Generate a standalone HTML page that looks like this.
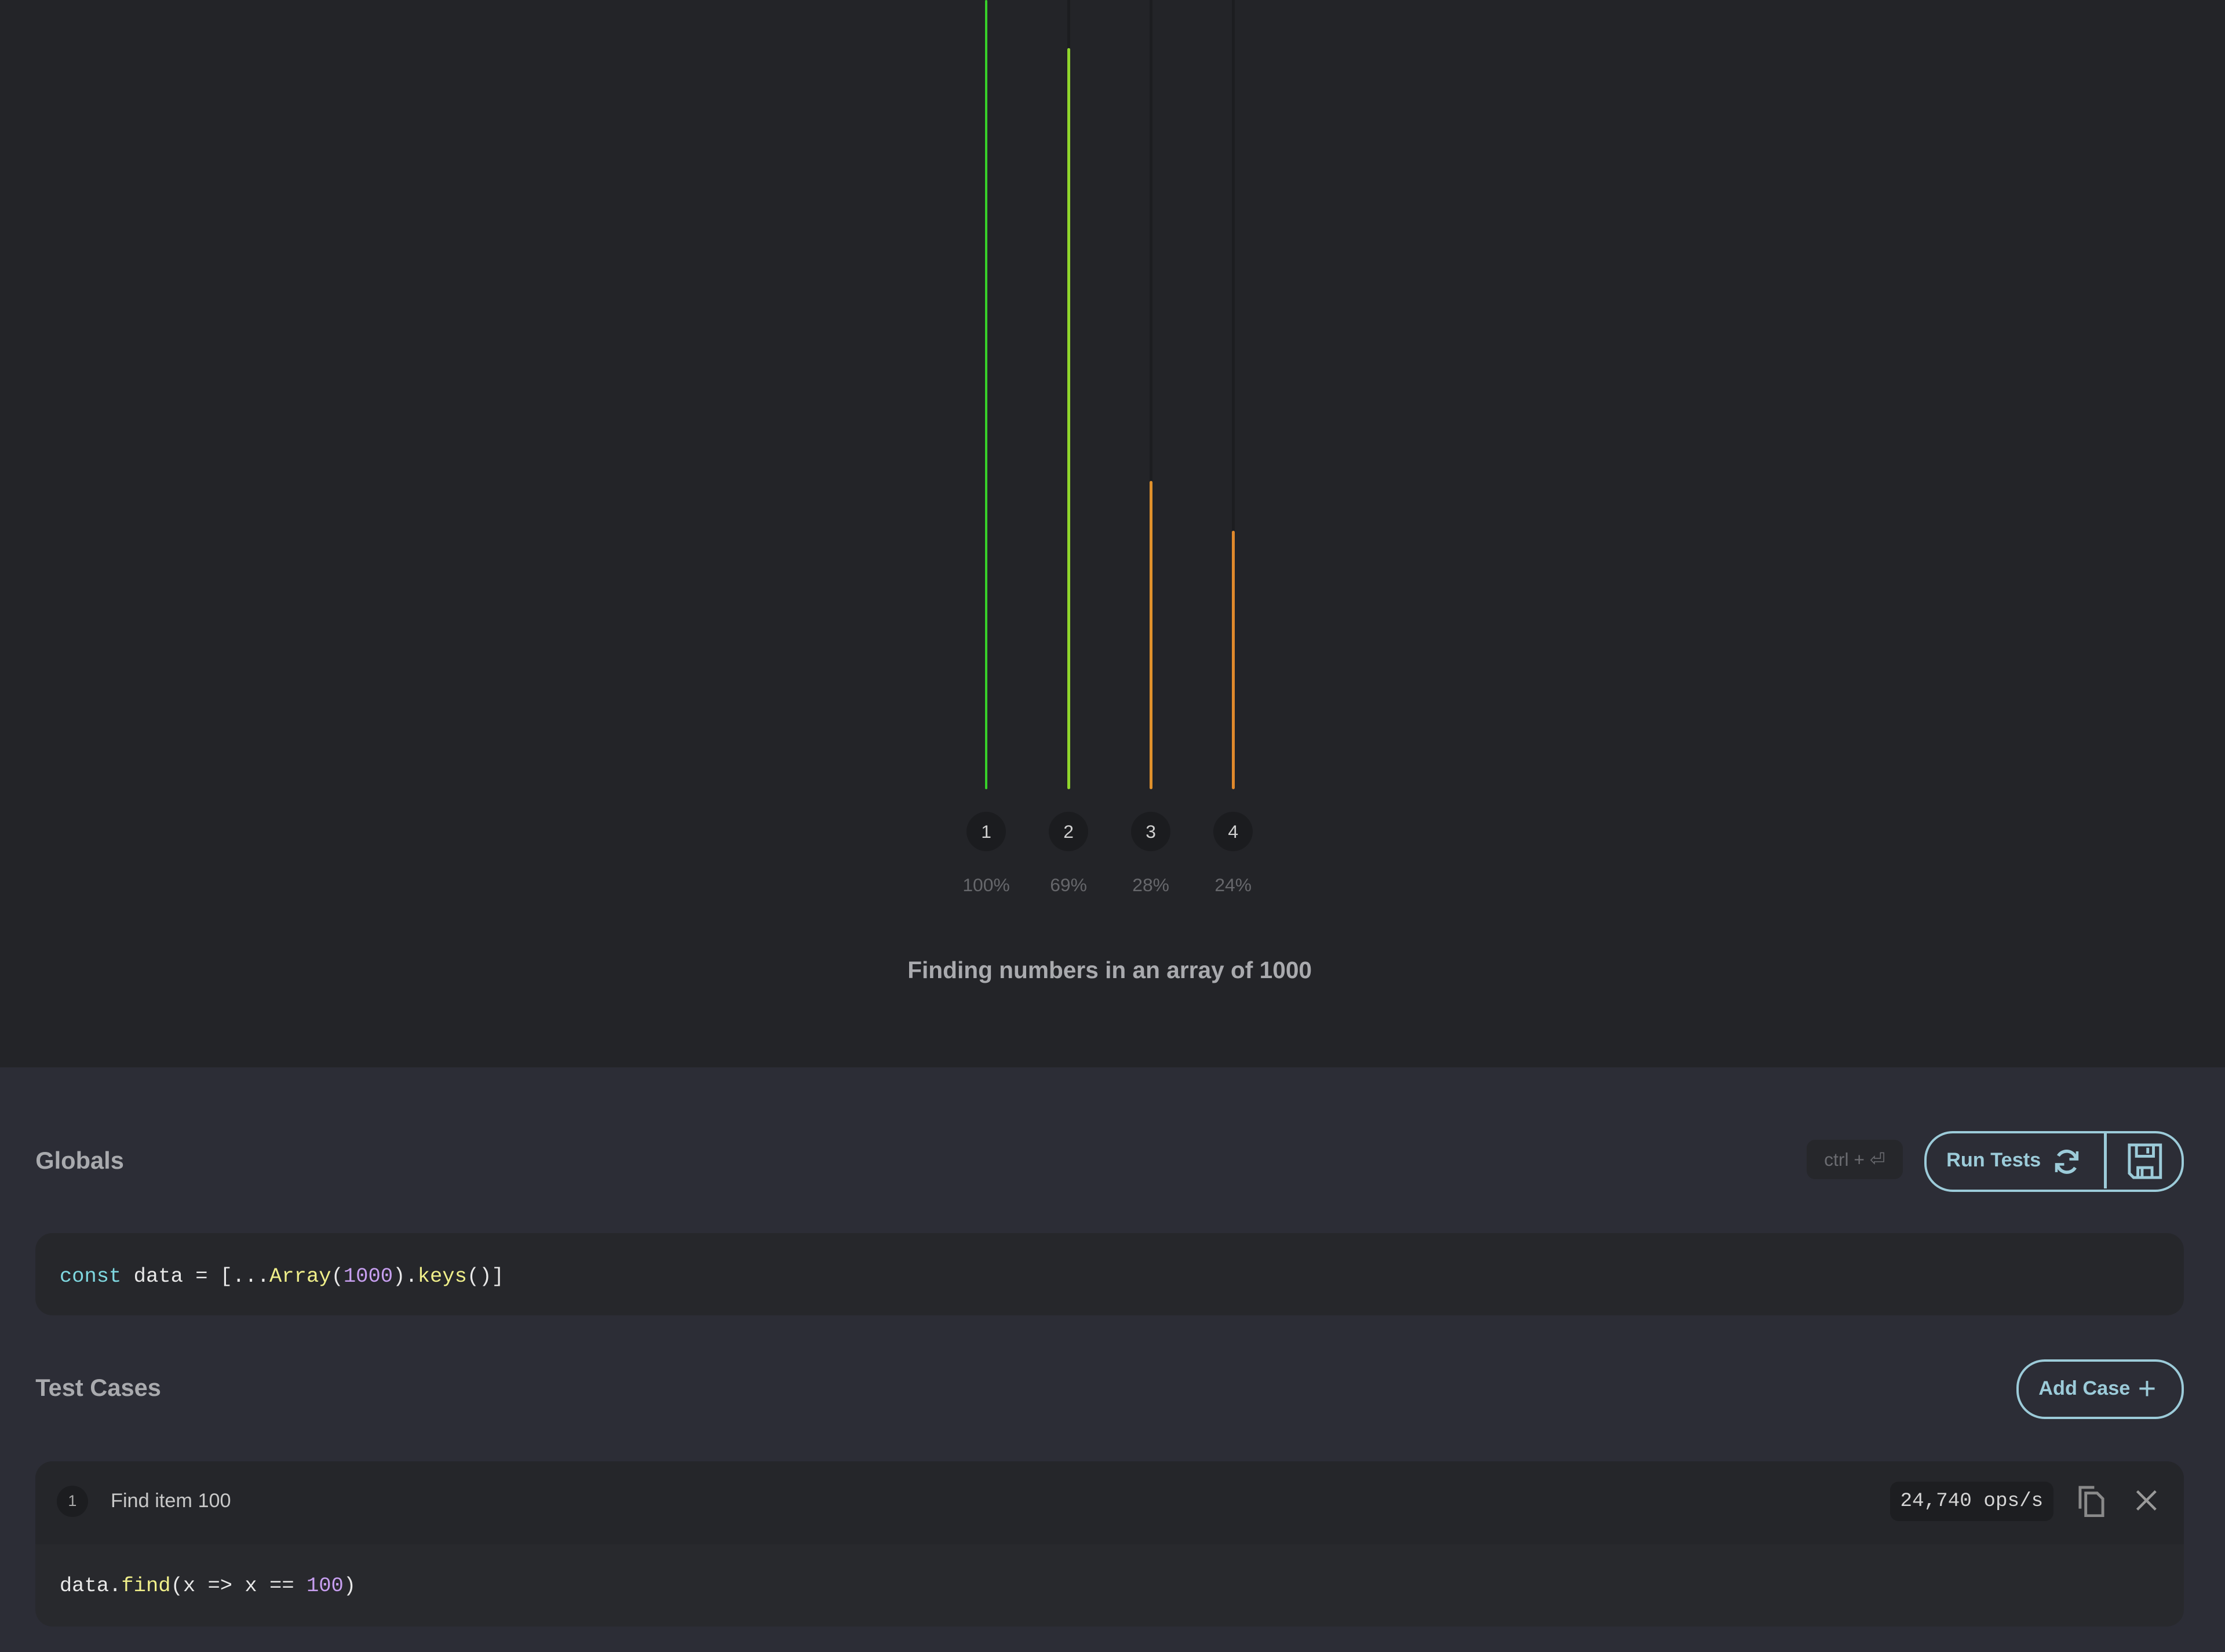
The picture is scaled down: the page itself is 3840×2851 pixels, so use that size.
<!DOCTYPE html>
<html><head><meta charset="utf-8"><style>
html,body{margin:0;padding:0;background:#2c2d36;overflow:hidden}
#w{zoom:2.449;width:1568px;height:1164px;position:relative;font-family:"Liberation Sans",sans-serif}
.a{position:absolute}
.top{left:0;top:0;width:1568px;height:752px;background:#232428}
.trk{width:2px;background:#1c1d20;top:0}
.bar{width:2px;border-radius:1px}
.c{width:28px;height:28px;border-radius:50%;background:#1b1c1f;color:#d0d0d0;font-size:13px;text-align:center;line-height:28px}
.p{width:60px;text-align:center;color:#66676b;font-size:13px}
.mono{font-family:"Liberation Mono",monospace;font-size:14.5px;color:#e8e8e8}
.h{font-weight:bold;font-size:17px;color:#a9aaae}
.btn{border:2px solid #9ccbd9;border-radius:20px;box-sizing:border-box;color:#9ccbd9;font-weight:bold;font-size:14px}
</style></head><body><div id="w">
<div class="a top"></div>
<div class="a trk" style="left:752px;height:34px"></div>
<div class="a trk" style="left:810px;height:339px"></div>
<div class="a trk" style="left:868px;height:374px"></div>
<div class="a bar" style="left:694px;top:0;height:556px;background:#38d02a"></div>
<div class="a bar" style="left:752px;top:34px;height:522px;background:#8fd52c"></div>
<div class="a bar" style="left:810px;top:339px;height:217px;background:#e0912c"></div>
<div class="a bar" style="left:868px;top:374px;height:182px;background:#e0892c"></div>
<div class="a c" style="left:681px;top:572px">1</div>
<div class="a c" style="left:739px;top:572px">2</div>
<div class="a c" style="left:797px;top:572px">3</div>
<div class="a c" style="left:855px;top:572px">4</div>
<div class="a p" style="left:665px;top:616px">100%</div>
<div class="a p" style="left:723px;top:616px">69%</div>
<div class="a p" style="left:781px;top:616px">28%</div>
<div class="a p" style="left:839px;top:616px">24%</div>
<div class="a h" style="left:0;width:1564px;text-align:center;top:674px;font-size:16.6px">Finding numbers in an array of 1000</div>

<div class="a h" style="left:25px;top:808px">Globals</div>
<div class="a" style="left:1273px;top:803px;width:68px;height:28px;background:#26272b;border-radius:6px;color:#6a6b70;font-size:13px;line-height:28px;text-align:center">ctrl + ⏎</div>
<div class="a btn" style="left:1356px;top:797px;width:183px;height:43px">
<span class="a" style="left:14px;top:11px">Run Tests</span>
<svg class="a" style="left:88px;top:9px" width="22" height="22" viewBox="0 0 24 24" fill="none" stroke="#9ccbd9" stroke-width="2.5"><path d="M19 9a7.5 7.5 0 0 0-13.5-1.5M5 15a7.5 7.5 0 0 0 13.5 1.5"/><path d="M20 4v6h-6M4 20v-6h6" stroke-width="2"/></svg>
<div class="a" style="left:125px;top:0;width:2px;height:39px;background:#9ccbd9"></div>
<svg class="a" style="left:141px;top:6px" width="26" height="27" viewBox="0 0 26 27" fill="none" stroke="#9ccbd9" stroke-width="2"><path d="M2 2h22v23H5l-3-3z"/><path d="M7 2v8h12V2M15 4v4M8 25v-7h10v7M11 19v6"/></svg>
</div>
<div class="a" style="left:25px;top:869px;width:1514px;height:58px;background:#26272b;border-radius:12px"></div>
<div class="a mono" style="left:42px;top:891px"><span style="color:#7fd8e0">const</span> data = [...<span style="color:#f0ef8a">Array</span>(<span style="color:#c79ff0">1000</span>).<span style="color:#f0ef8a">keys</span>()]</div>

<div class="a h" style="left:25px;top:968px">Test Cases</div>
<div class="a btn" style="left:1421px;top:958px;width:118px;height:42px"><span class="a" style="left:14px;top:11px">Add Case</span><span class="a" style="left:84px;top:6px;font-size:22px;font-weight:normal">+</span></div>

<div class="a" style="left:25px;top:1030px;width:1514px;height:116px;background:#28292d;border-radius:12px;overflow:hidden"><div style="height:58px;background:#25262a"></div></div>
<div class="a" style="left:40px;top:1047px;width:22px;height:22px;border-radius:50%;background:#1c1d20;color:#aaa;font-size:11px;line-height:22px;text-align:center">1</div>
<div class="a" style="left:78px;top:1050px;color:#c8c8c8;font-size:14px">Find item 100</div>
<div class="a mono" style="left:1332px;top:1044px;width:115px;height:28px;background:#1d1e21;border-radius:6px;line-height:28px;text-align:center;color:#d5d5d5;font-size:14px">24,740 ops/s</div>
<svg class="a" style="left:1464px;top:1046px" width="20" height="23" viewBox="0 0 20 23" fill="none" stroke="#8a8a8a" stroke-width="2"><path d="M12 2H2v15"/><path d="M6 6h8l4 4v12H6z"/></svg>
<svg class="a" style="left:1505px;top:1050px" width="15" height="15" viewBox="0 0 15 15" stroke="#9a9a9a" stroke-width="1.8"><path d="M1 1l13 13M14 1L1 14"/></svg>
<div class="a mono" style="left:42px;top:1109px">data.<span style="color:#f0ef8a">find</span>(x =&gt; x == <span style="color:#c79ff0">100</span>)</div>
</div></body></html>
